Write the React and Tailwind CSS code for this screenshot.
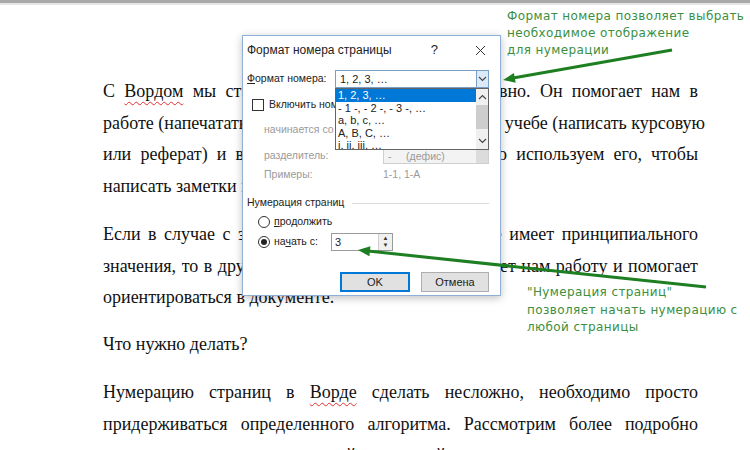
import React from "react";

const serif = { fontFamily: '"Liberation Serif", "Times New Roman", serif' };
const ui = { fontFamily: '"Liberation Sans", Arial, sans-serif' };
const note = { fontFamily: '"DejaVu Sans", Verdana, sans-serif' };

// a justified document line, like in the Word page
const Line = ({ children, last }) => (
  <div
    className={
      last
        ? "whitespace-nowrap text-left"
        : "whitespace-nowrap text-justify [text-align-last:justify]"
    }
  >
    {children}
  </div>
);

const Typo = ({ children }) => (
  <span className="underline decoration-wavy decoration-[#e03030] decoration-1 underline-offset-[4px]">
    {children}
  </span>
);

const Chevron = ({ up }) => (
  <svg width="9" height="6" viewBox="0 0 9 6" fill="none">
    <path
      d={up ? "M1 5L4.5 1.5L8 5" : "M1 1L4.5 4.5L8 1"}
      stroke="#444"
      strokeWidth="1.1"
    />
  </svg>
);

function Dialog() {
  return (
    <div
      className="absolute left-[242px] top-[35px] w-[259px] h-[261px] bg-white border border-[#8fb0d6] shadow-[0_2px_8px_rgba(0,0,0,0.25)] text-[10.5px] text-[#222]"
      style={ui}
    >
      <div className="h-[28px] flex items-center pl-[4px] pr-[14px] text-[12px]">
        <span className="flex-1">Формат номера страницы</span>
        <span className="mr-[37px] text-[13px]">?</span>
        <svg width="11" height="11" viewBox="0 0 11 11">
          <path d="M1 1L10 10M10 1L1 10" stroke="#333" strokeWidth="1" />
        </svg>
      </div>

      <div className="pl-[4px] pr-[11px]">
        <div className="mt-[6px] h-[18px] flex items-center">
          <span className="w-[88px] whitespace-nowrap">
            <span className="underline">Ф</span>ормат номера:
          </span>
          <div className="relative flex-1 h-[18px]">
            <div className="h-full flex border border-[#7a9ec4] bg-white text-[11px]">
              <span className="flex-1 pl-[4px] leading-[16px]">1, 2, 3, …</span>
              <span className="w-[12px] bg-[#dceaf8] border-l border-[#7a9ec4] flex items-center justify-center">
                <Chevron />
              </span>
            </div>
            <div className="absolute left-0 right-0 top-full h-[62px] bg-white border border-[#646464] flex z-10 overflow-hidden text-[11px]">
              <div className="flex-1 leading-[12.5px] whitespace-nowrap">
                <div className="bg-[#0078d7] text-white pl-[2px]">1, 2, 3, …</div>
                <div className="pl-[2px]">- 1 -, - 2 -, - 3 -, …</div>
                <div className="pl-[2px]">a, b, c, …</div>
                <div className="pl-[2px]">A, B, C, …</div>
                <div className="pl-[2px]">i, ii, iii, …</div>
              </div>
              <div className="w-[12px] bg-[#f0f0f0] flex flex-col items-center">
                <div className="h-[16px] flex items-center">
                  <Chevron up />
                </div>
                <div className="w-full h-[24px] bg-[#cdcdcd]" />
                <div className="flex-1" />
                <div className="h-[16px] flex items-center">
                  <Chevron />
                </div>
              </div>
            </div>
          </div>
        </div>

        <div className="mt-[10px] h-[14px] flex items-center pl-[5px]">
          <span className="w-[12px] h-[12px] border border-[#333] bg-white mr-[5px]" />
          <span>Включить номер главы</span>
        </div>

        <div className="mt-[11px] h-[14px] flex items-center pl-[17px] text-[#9a9a9a]">
          начинается со стилем
        </div>

        <div className="mt-[11px] h-[16px] flex items-center pl-[17px] text-[#9a9a9a]">
          <span className="w-[119px]">разделитель:</span>
          <div className="flex-1 h-[16px] flex border border-[#cfcfcf] bg-[#f3f3f3]">
            <span className="flex-1 pl-[4px] leading-[14px]">
              -&nbsp;&nbsp;&nbsp;&nbsp;&nbsp;(дефис)
            </span>
            <span className="w-[12px] bg-[#dcdcdc]" />
          </div>
        </div>

        <div className="mt-[4px] h-[14px] flex items-center pl-[17px] text-[#9a9a9a]">
          <span className="w-[119px]">Примеры:</span>
          <span>1-1, 1-A</span>
        </div>

        <div className="mt-[14px] h-[14px] flex items-center">
          <span className="pr-[8px]">Нумерация страниц</span>
          <span className="flex-1 h-px bg-[#dcdcdc]" />
        </div>

        <div className="mt-[5px] h-[14px] flex items-center pl-[11px]">
          <span className="w-[12px] h-[12px] rounded-full border border-[#333] bg-white mr-[4px]" />
          <span>
            <span className="underline">п</span>родолжить
          </span>
        </div>

        <div className="mt-[4px] h-[18px] flex items-center pl-[11px]">
          <span className="w-[12px] h-[12px] rounded-full border border-[#333] bg-white mr-[4px] flex items-center justify-center">
            <span className="w-[6px] h-[6px] rounded-full bg-[#222]" />
          </span>
          <span className="w-[57px]">
            на<span className="underline">ч</span>ать с:
          </span>
          <div className="w-[62px] h-[18px] flex border border-[#9a9a9a] bg-white">
            <span className="flex-1 pl-[3px] leading-[16px] text-[11px]">3</span>
            <span className="w-[14px] border-l border-[#cfcfcf] bg-[#f0f0f0] flex flex-col items-center justify-center text-[6px] leading-[7px] text-[#333]">
              <span>▲</span>
              <span>▼</span>
            </span>
          </div>
        </div>

        <div className="mt-[21px] h-[20px] flex justify-end gap-[11px] text-[11px]">
          <button className="w-[70px] h-[20px] bg-[#e1e1e1] border-2 border-[#0078d7] leading-[16px]">
            OK
          </button>
          <button className="w-[68px] h-[20px] bg-[#e1e1e1] border border-[#adadad] leading-[18px]">
            Отмена
          </button>
        </div>
      </div>
    </div>
  );
}

function Arrows() {
  return (
    <svg
      className="absolute inset-0 pointer-events-none"
      width="750"
      height="450"
      viewBox="0 0 750 450"
    >
      <line x1="672" y1="50" x2="513" y2="78" stroke="#1d7f22" strokeWidth="3" />
      <polygon points="503,80 515.7,82.8 513.9,73" fill="#1d7f22" />
      <line x1="706" y1="287" x2="368" y2="251" stroke="#1d7f22" strokeWidth="3" />
      <polygon points="358,250 370.4,246.3 369.4,256.3" fill="#1d7f22" />
    </svg>
  );
}

export default function App() {
  return (
    <div className="relative w-[750px] h-[450px] overflow-hidden bg-white">
      <div className="h-[3px] bg-[#a8a8a8]" />
      <div className="h-[2px] bg-[#e6e6e6]" />

      <div
        className="ml-[103px] w-[595px] mt-[71px] text-[18px] leading-[31.5px] text-[#111]"
        style={serif}
      >
        <div>
          <Line>
            С <Typo>Вордом</Typo> мы сталкиваемся практически ежедневно. Он помогает нам в
          </Line>
          <Line>
            работе (напечатать важный документ или отчет) и в учебе (написать курсовую
          </Line>
          <Line>
            или реферат) и в быту, когда мы довольно часто используем его, чтобы
          </Line>
          <Line last>написать заметки или список дел.</Line>
        </div>

        <div className="mt-[17px]">
          <Line>
            Если в случае с записками нумерация страниц не имеет принципиального
          </Line>
          <Line>
            значения, то в других случаях она заметно облегчает нам работу и помогает
          </Line>
          <Line last>ориентироваться в документе.</Line>
        </div>

        <div className="mt-[15px]">Что нужно делать?</div>

        <div className="mt-[17px]">
          <Line>
            Нумерацию страниц в <Typo>Ворде</Typo> сделать несложно, необходимо просто
          </Line>
          <Line>
            придерживаться определенного алгоритма. Рассмотрим более подробно
          </Line>
          <Line>все тонкости нумерации этой и другой версии текстового редактора</Line>
        </div>
      </div>

      <Dialog />

      <div
        className="absolute left-[507px] top-[8px] text-[12px] leading-[17px] tracking-[0.4px] text-[#3b8f3f]"
        style={note}
      >
        <div>Формат номера позволяет выбрать</div>
        <div>необходимое отображение</div>
        <div>для нумерации</div>
      </div>

      <div
        className="absolute left-[527px] top-[284px] text-[12px] leading-[17.5px] tracking-[0.4px] text-[#3b8f3f]"
        style={note}
      >
        <div>"Нумерация страниц"</div>
        <div>позволяет начать нумерацию с</div>
        <div>любой страницы</div>
      </div>

      <Arrows />
    </div>
  );
}
